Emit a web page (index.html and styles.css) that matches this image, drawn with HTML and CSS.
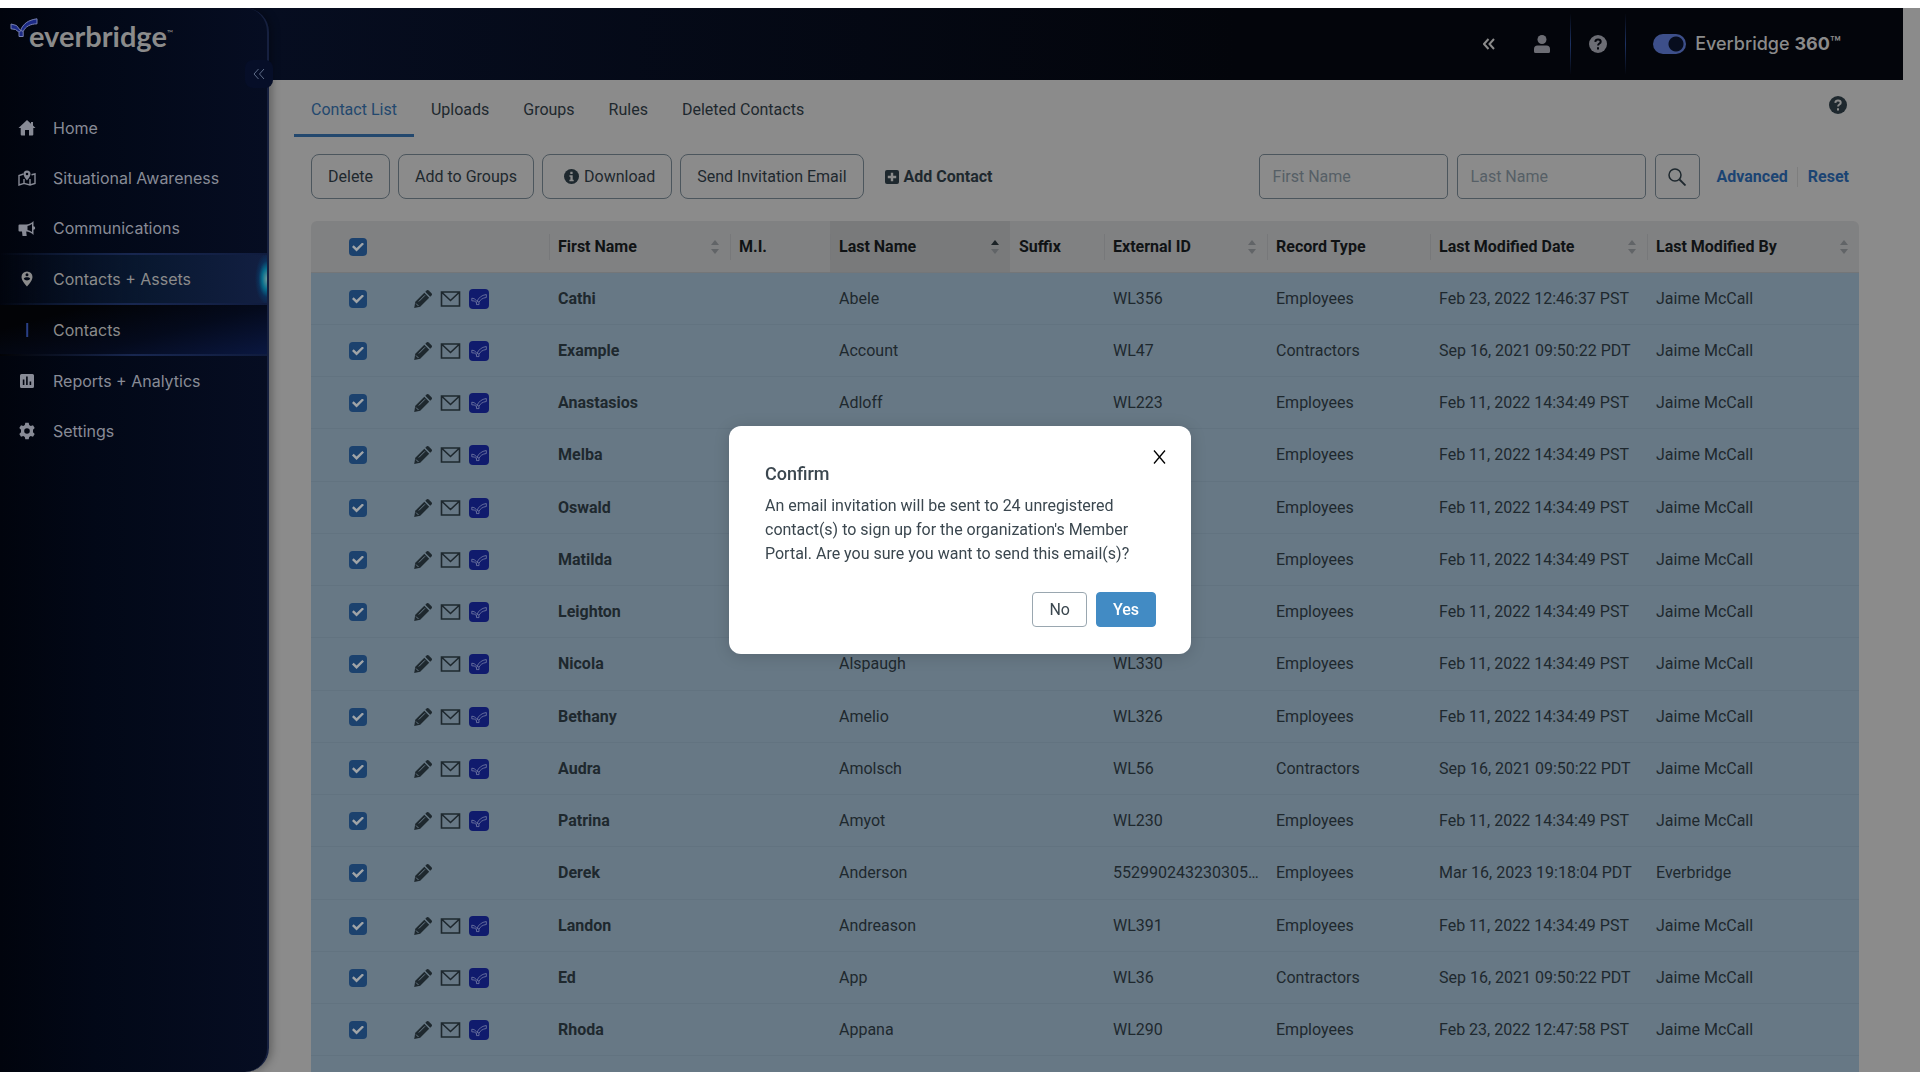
FILE: index.html
```html
<!DOCTYPE html>
<html lang="en">
<head>
<meta charset="utf-8">
<meta name="viewport" content="width=device-width, initial-scale=1">
<title>Everbridge - Contact List</title>
<link rel="stylesheet" href="styles.css">
</head>
<body>
<svg class="sprite" aria-hidden="true">
  <symbol id="pencil" viewBox="0 0 18 18"><path d="M1.300 11.800 10.300 2.800l4.900 4.900-9 9L.2 17.900z"/><path d="M11.300 1.800 12.600.500a1.500 1.500 0 0 1 2.100 0l2.800 2.800a1.500 1.500 0 0 1 0 2.100L16.200 6.700z"/><path class="pencil-line" d="M4.800 11.500 11 5.300M2 13.500l2.500 2.500"/></symbol>
  <symbol id="mail" viewBox="0 0 20 16"><path d="M1 1h18v14H1zM1.500 1.500 10 9.500l8.500-8" fill="none" stroke="currentColor" stroke-width="1.600"/></symbol>
  <symbol id="member" viewBox="0 0 20 20"><rect width="20" height="20" rx="4" fill="#101b6d"/><path d="M2.800 9.200 5.600 9.800 8 12.500C9.500 8.800 12.500 6.200 17.300 5.500V8.500C13.500 8.900 11.300 10.700 10 13.300V15.600H7.500V13.500L5.300 12 2.800 11.800zM7.500 13.500 8.800 12.300 10 13.300" fill="none" stroke="#767da6" stroke-width=".8"/></symbol>
  <symbol id="sort" viewBox="0 0 8 14"><path class="up" d="M4 0 8 5H0z"/><path class="down" d="M0 9h8l-4 5z"/></symbol>
  <symbol id="help" viewBox="0 0 18 18"><circle cx="9" cy="9" r="9"/><path class="mark" d="M6.300 6.800C6.500 5.200 7.500 4.500 9 4.500c1.600 0 2.700.900 2.700 2.200 0 1.900-2.600 1.800-2.600 3.700M9 12.200v2.200" fill="none" stroke-width="2"/></symbol>
  <symbol id="chevrons" viewBox="0 0 12 12"><path d="M5.500 1 1 6l4.500 5M11 1 6.500 6 11 11" fill="none" stroke="currentColor"/></symbol>
</svg>
<div class="app">
  <header class="topbar">
    <button class="top-btn" aria-label="Collapse"><svg class="i-chev"><use href="#chevrons"/></svg></button>
    <button class="top-btn user" aria-label="Account"><svg width="16" height="18" viewBox="0 0 16 18"><circle cx="8" cy="4.500" r="4.500"/><path d="M3.500 10.500h9A3.500 3.500 0 0 1 16 14v2.500a1.500 1.500 0 0 1-1.500 1.500h-13A1.500 1.500 0 0 1 0 16.500V14a3.500 3.500 0 0 1 3.500-3.500z"/></svg></button>
    <button class="top-btn ruled" aria-label="Help"><svg class="i18"><use href="#help"/></svg></button>
    <label class="toggle"><input type="checkbox" role="switch" checked><span>Everbridge <b>360</b>™</span></label>
  </header>

  <aside class="sidebar">
    <a class="brand" href="#"><svg width="28" height="20" viewBox="0 0 28 20"><path d="M1 6 6.500 7.500 10.500 12.500C13 6 18 2 27 .800V5.800C20 6 15.500 8.500 13.200 13.500V18.500H9V14.200L5.500 11.500 1 10.800zM9 14.200 11 12.500 13.200 13.500" fill="#1c2a86" stroke="#7780b0" stroke-width="1"/></svg><span>everbridge</span><small>™</small></a>
    <button class="collapse" aria-label="Collapse menu"><svg class="i-chev"><use href="#chevrons"/></svg></button>
    <nav class="menu">
      <a href="#"><svg viewBox="0 0 18 18"><path d="M9 1 .500 9h2.200v6.500a1 1 0 0 0 1 1H7V11h4v5.500h3.300a1 1 0 0 0 1-1V9h2.200L15 6.600V3h-2v1.700z"/></svg>Home</a>
      <a href="#"><svg viewBox="0 0 18 18"><path d="M5.500 5 1 6.500V16l5-1.600 6 1.600 5-1.600V5l-3.500.800M6 10v4.400M12 10v6" fill="none" stroke="currentColor" stroke-width="1.400"/><path d="M9 1.500a3.500 3.500 0 0 1 3.500 3.500c0 2.500-3.500 6.500-3.500 6.500S5.500 7.500 5.500 5A3.500 3.500 0 0 1 9 1.500zm0 2.200a1.300 1.300 0 1 0 0 2.600 1.300 1.300 0 0 0 0-2.600z" fill-rule="evenodd"/></svg>Situational Awareness</a>
      <a href="#"><svg viewBox="0 0 18 18"><path d="M1.500 5.500H8c3 0 5.500-1.500 7.500-3.500v5.300a1.700 1.700 0 0 1 0 3.400V16c-2-2-4.500-3.500-7.300-3.500L8.700 17H4.500L4 12.500H1.500A1 1 0 0 1 .500 11.500v-5a1 1 0 0 1 1-1zM9.500 7v4c1.600.300 3 .900 4.500 1.900V5.100C12.500 6.100 11.100 6.700 9.500 7z" fill-rule="evenodd"/></svg>Communications</a>
      <a class="active" href="#"><svg viewBox="0 0 18 18"><path d="M9 1.500A5.500 5.500 0 0 1 14.500 7c0 4-5.500 9.500-5.500 9.500S3.500 11 3.500 7A5.500 5.500 0 0 1 9 1.500zM9 3.300a1.500 1.500 0 1 0 0 3 1.500 1.500 0 0 0 0-3zM5.800 8.800c.700 1 1.900 1.700 3.200 1.700s2.500-.7 3.200-1.700C12 7.700 10 7.300 9 7.300s-3 .4-3.200 1.500z" fill-rule="evenodd"/></svg>Contacts + Assets</a>
      <a class="current" href="#"><svg viewBox="0 0 18 18"><path d="M9.200 2v14" stroke="#293f85" stroke-width="2"/></svg>Contacts</a>
      <a href="#"><svg viewBox="0 0 18 18"><path d="M3.500 2h11A1.500 1.500 0 0 1 16 3.500v11a1.500 1.500 0 0 1-1.500 1.500h-11A1.500 1.500 0 0 1 2 14.500v-11A1.500 1.500 0 0 1 3.500 2zm1.300 5.500V13h1.600V7.500zm3.300-3V13h1.600V4.500zm3.500 5V13h1.600V9.500z" fill-rule="evenodd"/></svg>Reports + Analytics</a>
      <a href="#"><svg viewBox="0 0 18 18"><path d="M7.300.800h3.400l.5 2.300 1.500.9 2.300-.8 1.700 2.900-1.700 1.700v2.400l1.700 1.700-1.700 2.900-2.300-.8-1.500.9-.5 2.300H7.300l-.5-2.300-1.500-.9-2.300.8-1.700-2.900L3 10.200V7.800L1.300 6.100 3 3.200l2.300.8 1.500-.9zM9 6.200a2.800 2.800 0 1 0 0 5.600 2.800 2.800 0 0 0 0-5.600z" fill-rule="evenodd"/></svg>Settings</a>
    </nav>
  </aside>

  <main class="main">
    <div class="tabbar">
      <nav class="tabs"><a class="on" href="#">Contact List</a><a href="#">Uploads</a><a href="#">Groups</a><a href="#">Rules</a><a href="#">Deleted Contacts</a></nav>
      <button class="page-help" aria-label="Page help"><svg class="i18"><use href="#help"/></svg></button>
    </div>
    <div class="toolbar">
      <button class="btn">Delete</button>
      <button class="btn">Add to Groups</button>
      <button class="btn download"><svg width="15" height="15" viewBox="0 0 15 15"><circle cx="7.500" cy="7.500" r="7.500"/><path class="cut" d="M6.300 2.800h2.300V5H6.300zM5.400 6.200h3.300v4.500h1v1.500H5.400v-1.500h1V7.700h-1z"/></svg>Download</button>
      <button class="btn">Send Invitation Email</button>
      <button class="add"><svg width="14" height="14" viewBox="0 0 14 14"><rect width="14" height="14" rx="2"/><path class="cut" d="M5.800 2.800h2.400v3h3v2.400h-3v3H5.800v-3h-3V5.800h3z"/></svg>Add Contact</button>
      <form class="search">
        <input class="field" type="text" placeholder="First Name" aria-label="First Name">
        <input class="field" type="text" placeholder="Last Name" aria-label="Last Name">
        <button class="find" type="button" aria-label="Search"><svg width="18" height="18" viewBox="0 0 18 18"><circle cx="7" cy="7" r="6" fill="none" stroke="currentColor" stroke-width="1.500"/><path d="m11.500 11.500 6 6" stroke="currentColor" stroke-width="1.800"/></svg></button>
        <a class="link" href="#">Advanced</a><a class="link reset" href="#">Reset</a>
      </form>
    </div>

    <table class="contacts">
      <colgroup><col class="c-check"><col class="c-act"><col class="c-first"><col class="c-mi"><col class="c-last"><col class="c-suffix"><col class="c-ext"><col class="c-type"><col class="c-date"><col class="c-by"></colgroup>
      <thead><tr>
        <th class="check"><input type="checkbox" checked aria-label="Select all"></th><th></th>
        <th class="sep"><div>First Name<svg class="sort"><use href="#sort"/></svg></div></th>
        <th class="sep"><div>M.I.</div></th>
        <th class="sep sorted" aria-sort="ascending"><div>Last Name<svg class="sort asc" viewBox="0 0 8 14"><path class="up" d="M4 0 8 5H0z"/><path class="down" d="M0 9h8l-4 5z"/></svg></div></th>
        <th><div>Suffix</div></th>
        <th class="sep"><div>External ID<svg class="sort"><use href="#sort"/></svg></div></th>
        <th class="sep"><div>Record Type</div></th>
        <th class="sep"><div>Last Modified Date<svg class="sort"><use href="#sort"/></svg></div></th>
        <th class="sep"><div>Last Modified By<svg class="sort"><use href="#sort"/></svg></div></th>
      </tr></thead>
      <tbody>
        <tr><td class="check"><input type="checkbox" checked aria-label="Select Cathi Abele"></td><td class="act"><div><svg class="i-pen"><use href="#pencil"/></svg><svg class="i-mail"><use href="#mail"/></svg><svg class="i-mem"><use href="#member"/></svg></div></td><td><b>Cathi</b></td><td></td><td>Abele</td><td></td><td>WL356</td><td>Employees</td><td>Feb 23, 2022 12:46:37 PST</td><td>Jaime McCall</td></tr>
        <tr><td class="check"><input type="checkbox" checked aria-label="Select Example Account"></td><td class="act"><div><svg class="i-pen"><use href="#pencil"/></svg><svg class="i-mail"><use href="#mail"/></svg><svg class="i-mem"><use href="#member"/></svg></div></td><td><b>Example</b></td><td></td><td>Account</td><td></td><td>WL47</td><td>Contractors</td><td>Sep 16, 2021 09:50:22 PDT</td><td>Jaime McCall</td></tr>
        <tr><td class="check"><input type="checkbox" checked aria-label="Select Anastasios Adloff"></td><td class="act"><div><svg class="i-pen"><use href="#pencil"/></svg><svg class="i-mail"><use href="#mail"/></svg><svg class="i-mem"><use href="#member"/></svg></div></td><td><b>Anastasios</b></td><td></td><td>Adloff</td><td></td><td>WL223</td><td>Employees</td><td>Feb 11, 2022 14:34:49 PST</td><td>Jaime McCall</td></tr>
        <tr><td class="check"><input type="checkbox" checked aria-label="Select Melba"></td><td class="act"><div><svg class="i-pen"><use href="#pencil"/></svg><svg class="i-mail"><use href="#mail"/></svg><svg class="i-mem"><use href="#member"/></svg></div></td><td><b>Melba</b></td><td></td><td></td><td></td><td></td><td>Employees</td><td>Feb 11, 2022 14:34:49 PST</td><td>Jaime McCall</td></tr>
        <tr><td class="check"><input type="checkbox" checked aria-label="Select Oswald"></td><td class="act"><div><svg class="i-pen"><use href="#pencil"/></svg><svg class="i-mail"><use href="#mail"/></svg><svg class="i-mem"><use href="#member"/></svg></div></td><td><b>Oswald</b></td><td></td><td></td><td></td><td></td><td>Employees</td><td>Feb 11, 2022 14:34:49 PST</td><td>Jaime McCall</td></tr>
        <tr><td class="check"><input type="checkbox" checked aria-label="Select Matilda"></td><td class="act"><div><svg class="i-pen"><use href="#pencil"/></svg><svg class="i-mail"><use href="#mail"/></svg><svg class="i-mem"><use href="#member"/></svg></div></td><td><b>Matilda</b></td><td></td><td></td><td></td><td></td><td>Employees</td><td>Feb 11, 2022 14:34:49 PST</td><td>Jaime McCall</td></tr>
        <tr><td class="check"><input type="checkbox" checked aria-label="Select Leighton"></td><td class="act"><div><svg class="i-pen"><use href="#pencil"/></svg><svg class="i-mail"><use href="#mail"/></svg><svg class="i-mem"><use href="#member"/></svg></div></td><td><b>Leighton</b></td><td></td><td></td><td></td><td></td><td>Employees</td><td>Feb 11, 2022 14:34:49 PST</td><td>Jaime McCall</td></tr>
        <tr><td class="check"><input type="checkbox" checked aria-label="Select Nicola Alspaugh"></td><td class="act"><div><svg class="i-pen"><use href="#pencil"/></svg><svg class="i-mail"><use href="#mail"/></svg><svg class="i-mem"><use href="#member"/></svg></div></td><td><b>Nicola</b></td><td></td><td>Alspaugh</td><td></td><td>WL330</td><td>Employees</td><td>Feb 11, 2022 14:34:49 PST</td><td>Jaime McCall</td></tr>
        <tr><td class="check"><input type="checkbox" checked aria-label="Select Bethany Amelio"></td><td class="act"><div><svg class="i-pen"><use href="#pencil"/></svg><svg class="i-mail"><use href="#mail"/></svg><svg class="i-mem"><use href="#member"/></svg></div></td><td><b>Bethany</b></td><td></td><td>Amelio</td><td></td><td>WL326</td><td>Employees</td><td>Feb 11, 2022 14:34:49 PST</td><td>Jaime McCall</td></tr>
        <tr><td class="check"><input type="checkbox" checked aria-label="Select Audra Amolsch"></td><td class="act"><div><svg class="i-pen"><use href="#pencil"/></svg><svg class="i-mail"><use href="#mail"/></svg><svg class="i-mem"><use href="#member"/></svg></div></td><td><b>Audra</b></td><td></td><td>Amolsch</td><td></td><td>WL56</td><td>Contractors</td><td>Sep 16, 2021 09:50:22 PDT</td><td>Jaime McCall</td></tr>
        <tr><td class="check"><input type="checkbox" checked aria-label="Select Patrina Amyot"></td><td class="act"><div><svg class="i-pen"><use href="#pencil"/></svg><svg class="i-mail"><use href="#mail"/></svg><svg class="i-mem"><use href="#member"/></svg></div></td><td><b>Patrina</b></td><td></td><td>Amyot</td><td></td><td>WL230</td><td>Employees</td><td>Feb 11, 2022 14:34:49 PST</td><td>Jaime McCall</td></tr>
        <tr><td class="check"><input type="checkbox" checked aria-label="Select Derek Anderson"></td><td class="act"><div><svg class="i-pen"><use href="#pencil"/></svg></div></td><td><b>Derek</b></td><td></td><td>Anderson</td><td></td><td>552990243230305…</td><td>Employees</td><td>Mar 16, 2023 19:18:04 PDT</td><td>Everbridge</td></tr>
        <tr><td class="check"><input type="checkbox" checked aria-label="Select Landon Andreason"></td><td class="act"><div><svg class="i-pen"><use href="#pencil"/></svg><svg class="i-mail"><use href="#mail"/></svg><svg class="i-mem"><use href="#member"/></svg></div></td><td><b>Landon</b></td><td></td><td>Andreason</td><td></td><td>WL391</td><td>Employees</td><td>Feb 11, 2022 14:34:49 PST</td><td>Jaime McCall</td></tr>
        <tr><td class="check"><input type="checkbox" checked aria-label="Select Ed App"></td><td class="act"><div><svg class="i-pen"><use href="#pencil"/></svg><svg class="i-mail"><use href="#mail"/></svg><svg class="i-mem"><use href="#member"/></svg></div></td><td><b>Ed</b></td><td></td><td>App</td><td></td><td>WL36</td><td>Contractors</td><td>Sep 16, 2021 09:50:22 PDT</td><td>Jaime McCall</td></tr>
        <tr><td class="check"><input type="checkbox" checked aria-label="Select Rhoda Appana"></td><td class="act"><div><svg class="i-pen"><use href="#pencil"/></svg><svg class="i-mail"><use href="#mail"/></svg><svg class="i-mem"><use href="#member"/></svg></div></td><td><b>Rhoda</b></td><td></td><td>Appana</td><td></td><td>WL290</td><td>Employees</td><td>Feb 23, 2022 12:47:58 PST</td><td>Jaime McCall</td></tr>
        <tr><td colspan="10"></td></tr>
      </tbody>
    </table>
  </main>
</div>

<div class="modal-layer">
  <section class="dialog" role="dialog" aria-modal="true" aria-labelledby="dlg-title">
    <button class="close" aria-label="Close"><svg width="13" height="14" viewBox="0 0 13 14"><path d="m1 .500 11 13M12 .500 1 13.500" stroke="#000" stroke-width="1.300"/></svg></button>
    <h2 id="dlg-title">Confirm</h2>
    <p>An email invitation will be sent to 24 unregistered contact(s) to sign up for the organization's Member Portal. Are you sure you want to send this email(s)?</p>
    <div class="actions"><button class="no">No</button><button class="yes">Yes</button></div>
  </section>
</div>
</body>
</html>
```
FILE: styles.css
```css
* { box-sizing: border-box; }
body {
  margin: 0;
  padding: 8px 0;
  background: #fff;
  font: 16px/20px Roboto, "Liberation Sans", sans-serif;
  color: #1e282e;
}
button, input { font: inherit; color: inherit; }
button { background: none; border: 0; padding: 0; }
a { color: inherit; text-decoration: none; }
svg { display: block; flex: none; fill: currentColor; }
.sprite { position: absolute; width: 0; height: 0; }

.app {
  display: grid;
  grid-template: 72px minmax(0, 1fr) / 269px minmax(0, 1fr);
  height: calc(100vh - 16px);
  padding-right: 17px;
  overflow: hidden;
  background: #8b8b8b;
}

/* Top bar */
.topbar {
  grid-area: 1 / 1 / 2 / 3;
  display: flex;
  align-items: center;
  justify-content: flex-end;
  padding-right: 62px;
  background: linear-gradient(90deg, #060d22 0, #060d20 14%, #03050b 65%);
  color: #6c6d74;
}
.top-btn { display: flex; align-items: center; justify-content: center; height: 60px; }
.top-btn .i-chev { stroke-width: 2; color: #8b8b8b; }
.top-btn.user { width: 75px; padding-left: 39px; justify-content: flex-start; }
.top-btn.ruled {
  width: 56px;
  border: solid;
  border-width: 0 1px;
  border-image: linear-gradient(transparent, #1d3263, transparent) 1;
}
.i-chev { width: 12px; height: 12px; }
.i18 { width: 18px; height: 18px; stroke: #04060c; }
.page-help .i18 { stroke: #8b8b8b; }
#help circle { stroke: none; }
.toggle {
  display: flex;
  align-items: center;
  gap: 9px;
  padding-left: 27px;
  font: 500 18px/20px Inter, sans-serif;
  color: #8b8b8b;
}
.toggle input {
  appearance: none;
  width: 33px;
  height: 20px;
  margin: 0;
  border-radius: 10px;
  background: radial-gradient(circle at 23px 10px, #070d1e 7px, #3d4f8a 8px);
}

/* Sidebar */
.sidebar {
  grid-area: 1 / 1 / 3 / 2;
  position: relative;
  border-right: 2px solid #16203f;
  border-radius: 0 24px 24px 0;
  background: linear-gradient(90deg, #01040d, #020817 35%, #060d22);
  box-shadow: 3px 0 8px rgba(0, 0, 0, .3);
  color: #888b96;
}
.brand { display: flex; align-items: flex-start; padding: 10px 0 0 10px; height: 95px; color: #8b8b8b; }
.brand span { margin-left: -9px; font: 700 29px/36px Lato, sans-serif; }
.brand small { font: 8px/30px Lato, sans-serif; }
.collapse {
  position: absolute;
  right: -6px;
  top: 52px;
  display: grid;
  place-items: center;
  width: 28px;
  height: 28px;
  border-radius: 8px;
  background: #060e28;
  color: #5f6d88;
}
.collapse svg { stroke-width: 1; }
.menu a {
  display: flex;
  align-items: center;
  gap: 17px;
  height: 50px;
  padding-left: 18px;
  font: 16px/20px Inter, sans-serif;
}
.menu svg { width: 18px; height: 18px; }
.menu .active, .menu .current {
  height: 51px;
  color: #8b8b8b;
  border-bottom: 2px solid;
  border-image: linear-gradient(90deg, transparent, #182750 50%, #101c3e) 1;
}
.menu .active {
  height: 52px;
  border-top: 2px solid;
  background:
    radial-gradient(ellipse 12px 26px at 100% 50%, #6a9a9b, #086d8c 40%, #06417280 70%, transparent),
    linear-gradient(90deg, transparent, #091830 55%, #121f42);
}
.menu .current { background: linear-gradient(165deg, #020306 20%, #040a1c 60%, #0a1740); }

/* Page */
.main { grid-area: 2 / 2; padding: 0 44px 0 42px; min-width: 0; }
.tabbar { display: flex; justify-content: space-between; margin-left: -17px; padding-right: 12px; }
.tabs { display: flex; }
.tabs a { height: 57px; padding: 20px 17px 0; border-bottom: 3px solid transparent; }
.tabs .on { color: #23486e; border-color: #23486e; }
.page-help { padding-top: 16px; align-self: flex-start; }

.toolbar { display: flex; align-items: center; gap: 8px; padding: 17px 0 22px; }
.btn, .field, .find { height: 45px; border: 1px solid #4c565d; border-radius: 8px; }
.btn { padding: 0 16px; white-space: nowrap; }
.download, .add { display: flex; align-items: center; gap: 5px; }
.download { padding-left: 21px; }
.cut { fill: #8b8b8b; }
.add { font-weight: 700; padding-left: 13px; white-space: nowrap; }
.search { display: flex; align-items: center; gap: 9px; margin-left: auto; }
.field { width: 189px; padding: 0 13px; border-radius: 5px; background: none; }
.field::placeholder { color: #565f66; opacity: 1; }
.find { width: 45px; border-radius: 5px; display: grid; place-items: center; }
.link { color: #1b4473; font-weight: 700; margin-left: 8px; }
.reset { margin: 0 10px 0 0; padding-left: 10px; border-left: 1px solid #7e7e7e; }

.contacts { width: 100%; table-layout: fixed; border-spacing: 0; }
.c-check { width: 94px; } .c-act { width: 144px; } .c-first { width: 181px; }
.c-mi { width: 100px; } .c-last { width: 180px; } .c-suffix { width: 94px; }
.c-ext { width: 163px; } .c-type { width: 163px; } .c-date { width: 217px; }
th {
  height: 52px;
  padding: 0;
  background: #808182;
  border-bottom: 1px solid #747678;
  color: #101315;
  text-align: left;
  font-weight: 700;
  white-space: nowrap;
}
th:first-child { border-radius: 6px 0 0; }
th:last-child { border-radius: 0 6px 0 0; }
th div { display: flex; align-items: center; justify-content: space-between; height: 26px; padding: 0 11px 0 9px; }
th.sep div { padding-left: 8px; border-left: 1px solid #77787a; }
th.sorted { background: #797a7b; }
.sort { width: 8px; height: 14px; fill: #616467; }
.asc .up { fill: #1b2226; }
td {
  height: 52px;
  padding: 0 0 0 9px;
  background: #677885;
  border-bottom: 1px solid #627380;
  white-space: nowrap;
}
tr:nth-child(4n) td { height: 53px; }
.check { padding: 0; text-align: center; }
.check input {
  appearance: none;
  display: block;
  width: 18px;
  height: 18px;
  margin: 0 auto;
  padding: 5px 3px;
  border-radius: 4px;
  background: #1c426e;
}
.check input::before {
  content: "";
  display: block;
  width: 12px;
  height: 9px;
  background: #a0a4a7;
  clip-path: polygon(0 50%, 14% 31%, 38% 60%, 86% 0, 100% 18%, 38% 100%);
}
.act div { display: flex; align-items: center; gap: 8px; }
.i-pen { width: 18px; height: 18px; }
.pencil-line { stroke: #677885; fill: none; stroke-width: 1; }
.i-mail { width: 21px; height: 16px; }
.i-mem { width: 20px; height: 20px; }

/* Confirmation dialog */
.modal-layer { position: fixed; inset: 0; display: grid; place-items: center; }
.dialog {
  position: relative;
  width: 462px;
  padding: 36px 35px 27px 36px;
  border-radius: 12px;
  background: #fff;
  box-shadow: 0 2px 16px rgba(0, 0, 0, .15);
  color: #3b474f;
}
.close { position: absolute; top: 24px; right: 25px; }
.dialog h2 { margin: 0 0 8px; font-size: 18px; line-height: 24px; font-weight: 500; }
.dialog p { margin: 0; line-height: 24px; }
.actions { display: flex; justify-content: flex-end; gap: 9px; margin-top: 26px; }
.actions button { height: 35px; padding: 0 16px; border: 1px solid #9aa7b0; border-radius: 4px; }
.actions .yes { background: #428bc4; border-color: #428bc4; color: #fff; font-weight: 500; }
```
